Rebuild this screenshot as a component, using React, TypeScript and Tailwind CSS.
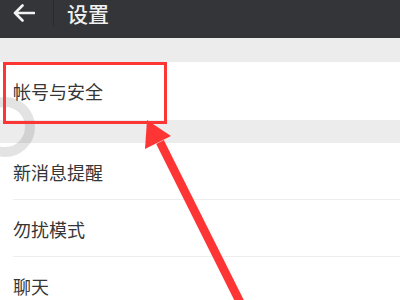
import React from "react";

const font = { fontFamily: '"Noto Sans CJK SC", "Noto Sans", sans-serif' };

function Row({ label, divider }: { label: string; divider?: boolean }) {
  return (
    <div className="relative h-[57px] bg-white flex items-center pl-[13px]">
      <span className="text-[18px] text-[#363636] leading-none">{label}</span>
      {divider && <div className="absolute left-[13px] right-0 bottom-0 h-px bg-[#eeeeee]" />}
    </div>
  );
}

export default function App() {
  return (
    <div className="relative w-[400px] h-[300px] overflow-hidden bg-[#ececec]" style={font}>
      <div className="h-[38px] bg-[#343538] flex items-start">
        <div className="w-[53px] h-[26px] flex items-center pl-[13px]">
          <svg width="22" height="18" viewBox="0 0 22 18">
            <path d="M2 9 H21 M9.5 1.5 L2 9 L9.5 16.5" stroke="#f2f2f2" strokeWidth="2.6" fill="none" strokeLinecap="round" strokeLinejoin="round" />
          </svg>
        </div>
        <div className="w-px h-[26px] bg-[#2a2b2e]" />
        <div className="h-[26px] flex items-center pl-[13px]">
          <span className="text-[21px] font-medium text-[#f0f0f0] leading-[26px]">设置</span>
        </div>
      </div>
      <div className="h-[24px]" />
      <div className="h-[58px] bg-white flex items-center pl-[13px]">
        <span className="text-[18px] text-[#363636] leading-none">帐号与安全</span>
      </div>
      <div className="h-[23px]" />
      <Row label="新消息提醒" divider />
      <Row label="勿扰模式" divider />
      <Row label="聊天" />

      <svg className="absolute inset-0 pointer-events-none" width="400" height="300" viewBox="0 0 400 300">
        <circle cx="5" cy="127" r="25" stroke="#000" strokeOpacity="0.11" strokeWidth="10" fill="none" />
        <polygon points="156.2,144 163.8,140 247.8,308 240.2,312" fill="#fd3535" />
        <polygon points="147,120 145,149 171,136" fill="#fd3535" />
      </svg>
      <div className="absolute left-[3px] top-[62px] w-[164px] h-[62px] border-[3px] border-[#fd3535]" />
    </div>
  );
}
